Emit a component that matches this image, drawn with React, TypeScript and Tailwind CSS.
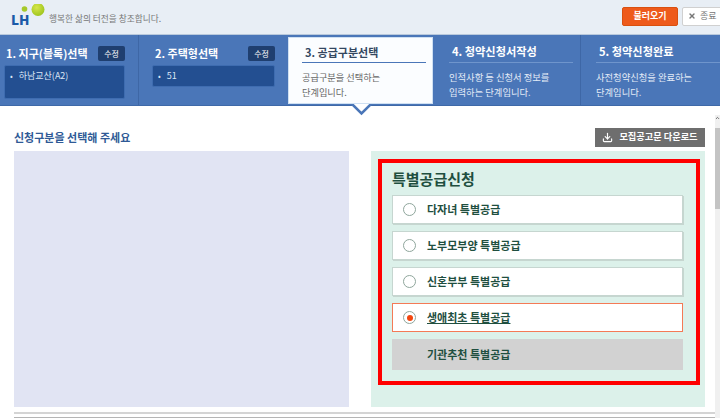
import React from 'react';
import { ChevronUp, Download, X } from 'lucide-react';

const font = { fontFamily: '"Noto Sans CJK KR", "Noto Sans", sans-serif' };

const Logo: React.FC = () => (
    <div className="relative w-[27px] h-[26px]">
        <svg className="absolute left-0 top-0" width="36" height="26" viewBox="0 0 36 26">
            <defs>
                <radialGradient id="ball" cx="0.4" cy="0.35" r="0.7">
                    <stop offset="0" stopColor="#d6e64a" />
                    <stop offset="1" stopColor="#9cc31c" />
                </radialGradient>
            </defs>
            <circle cx="27" cy="5.5" r="6.5" fill="url(#ball)" />
            <circle cx="13.5" cy="5" r="2.8" fill="#a6c92a" />
        </svg>
        <span className="absolute left-0 top-[7px] text-[13.5px] leading-[16px] font-black text-[#1b5aa8]">LH</span>
    </div>
);

const Radio: React.FC<{ checked?: boolean }> = ({ checked }) => (
    <span className="flex items-center justify-center w-[13px] h-[13px] rounded-full border-[1.5px] border-[#8fa69c] bg-white">
        {checked && <span className="w-[6px] h-[6px] rounded-full bg-[#f2460f]" />}
    </span>
);

const options = ['다자녀 특별공급', '노부모부양 특별공급', '신혼부부 특별공급'];

export default function App() {
    return (
        <div className="w-[720px] h-[418px] overflow-hidden bg-white flex flex-col" style={font}>
            <header className="h-[35px] shrink-0 flex items-center justify-between bg-[#e8eef5] border-b border-[#b9c9dc] pl-[11px]">
                <div className="flex items-center gap-[11px]">
                    <Logo />
                    <span className="text-[8.7px] text-[#777] mt-[4px]">행복한 삶의 터전을 창조합니다.</span>
                </div>
                <div className="flex items-center gap-[4px] -mt-[2px] mr-[-4px]">
                    <button className="w-[56px] h-[19px] rounded-[2px] bg-[#ee5a1b] border border-[#d9500f] text-white text-[9px] font-bold">불러오기</button>
                    <button className="w-[42px] h-[19px] flex items-center pl-[5px] gap-[4px] rounded-[2px] bg-white border border-[#d0d0d0] text-[#777] text-[9px]">
                        <X size={8} strokeWidth={4} />종료
                    </button>
                </div>
            </header>

            <nav className="h-[71px] shrink-0 flex bg-[#4a76b8] border-b border-[#3f69a8]">
                <div className="w-[139px] shrink-0 border-r border-[#3e67a6] pl-[4px] pr-[13px] pt-[11px]">
                    <div className="flex items-center justify-between h-[15px] pl-[2px]">
                        <span className="text-[11px] font-bold text-white leading-none">1. 지구(블록)선택</span>
                        <span className="w-[27px] h-[15px] rounded-[2px] bg-[#1f3f70] text-white text-[8px] flex items-center justify-center">수정</span>
                    </div>
                    <div className="mt-[4px] h-[34px] rounded-[2px] bg-[#234f91] border border-[#3e6cb0] px-[5px] pt-[3px] text-[9px] text-[#dbe6f5] leading-[14px]">
                        <span className="mr-[6px] text-[8px]">•</span>하남교산(A2)
                    </div>
                </div>
                <div className="w-[149px] shrink-0 pl-[13px] pr-[13px] pt-[11px]">
                    <div className="flex items-center justify-between h-[15px] pl-[3px]">
                        <span className="text-[11px] font-bold text-white leading-none">2. 주택형선택</span>
                        <span className="w-[27px] h-[15px] rounded-[2px] bg-[#1f3f70] text-white text-[8px] flex items-center justify-center">수정</span>
                    </div>
                    <div className="mt-[4px] h-[22px] rounded-[2px] bg-[#234f91] border border-[#3e6cb0] px-[5px] pt-[3px] text-[9px] text-[#dbe6f5] leading-[14px]">
                        <span className="mr-[6px] text-[8px]">•</span>51
                    </div>
                </div>
                <div className="relative w-[145px] shrink-0 mt-[2px] mb-[1px] bg-[#fbfdff] border border-[#cfe0f2] pl-[13px] pr-[6px] pt-[7px]">
                    <div className="h-[18px] pl-[3px] border-b border-[#4a76b8] text-[11px] font-bold text-[#33475f] leading-[15px]">3. 공급구분선택</div>
                    <p className="mt-[7px] text-[9.2px] leading-[15px] text-[#666]">공급구분을 선택하는<br />단계입니다.</p>
                    <svg className="absolute left-[58px] top-[66px]" width="30" height="13" viewBox="0 0 30 13">
                        <path d="M5 0 L14.5 9.5 L24 0" fill="#fff" stroke="#4a76b8" strokeWidth="2.5" />
                    </svg>
                </div>
                <div className="w-[148px] shrink-0 border-r border-[#3e67a6] pl-[16px] pr-[7px] pt-[9px]">
                    <div className="h-[19px] pl-[3px] border-b border-[#6f95cc] text-[11.2px] font-bold text-white leading-[15px]">4. 청약신청서작성</div>
                    <p className="mt-[7px] text-[9.3px] leading-[15px] text-[#e4ecf7]">인적사항 등 신청서 정보를<br />입력하는 단계입니다.</p>
                </div>
                <div className="flex-1 pl-[15px] pt-[9px]">
                    <div className="h-[19px] pl-[3px] border-b border-[#6f95cc] text-[11.2px] font-bold text-white leading-[15px]">5. 청약신청완료</div>
                    <p className="mt-[7px] text-[9.3px] leading-[15px] text-[#e4ecf7]">사전청약신청을 완료하는<br />단계입니다.</p>
                </div>
            </nav>

            <div className="flex-1 flex min-h-0">
                <main className="flex-1 min-w-0 pl-[14px]">
                    <div className="flex items-center justify-between h-[41px] pt-[21px] mb-[4px] pr-[10px]">
                        <h2 className="text-[11px] font-bold text-[#2f5a96]">신청구분을 선택해 주세요</h2>
                        <button className="w-[110px] h-[19px] flex items-center justify-center gap-[6px] bg-[#6e6e6e] text-white text-[9.2px] font-bold">
                            <Download size={11} strokeWidth={2.5} />모집공고문 다운로드
                        </button>
                    </div>
                    <div className="flex gap-[22px] h-[256px]">
                        <div className="w-[335px] bg-[#e1e4f3]" />
                        <div className="w-[334px] bg-[#dcf1ea] pl-[7px] pr-[5px] pt-[8px]">
                            <div className="w-[322px] h-[226px] border-[4px] border-[#ff0000] pl-[10px] pr-[13px] pt-[5px]">
                                <h3 className="h-[27px] text-[15px] font-bold text-[#1f4f3f] leading-[22px]">특별공급신청</h3>
                                <div className="flex flex-col gap-[7px]">
                                    {options.map(label => (
                                        <div key={label} className="h-[29px] flex items-center gap-[11px] pl-[10px] bg-white border border-[#c6d6d0] shadow-[1px_1px_0_#c6d6d0]">
                                            <Radio />
                                            <span className="text-[11px] font-bold text-[#1f4f3f]">{label}</span>
                                        </div>
                                    ))}
                                    <div className="h-[29px] flex items-center gap-[11px] pl-[10px] bg-white border border-[#f47a56]">
                                        <Radio checked />
                                        <span className="text-[11px] font-bold text-[#1f4f3f] underline">생애최초 특별공급</span>
                                    </div>
                                    <div className="h-[31px] flex items-center pl-[35px] bg-[#d2d2d2]">
                                        <span className="text-[11px] font-bold text-[#1f4f3f]">기관추천 특별공급</span>
                                    </div>
                                </div>
                            </div>
                        </div>
                    </div>
                    <div className="mt-[5px] h-[2px] bg-[#d4d4d4]" />
                    <div className="mt-[3px] h-[1px] bg-[#b5b5b5]" />
                </main>
                <aside className="w-[5px] shrink-0 mt-[9px] bg-[#f0f0f0] flex flex-col">
                    <div className="h-[13px] text-[#555] flex justify-center"><ChevronUp size={6} strokeWidth={4} /></div>
                    <div className="h-[81px] bg-[#c4c4c4]" />
                </aside>
            </div>
        </div>
    );
}
